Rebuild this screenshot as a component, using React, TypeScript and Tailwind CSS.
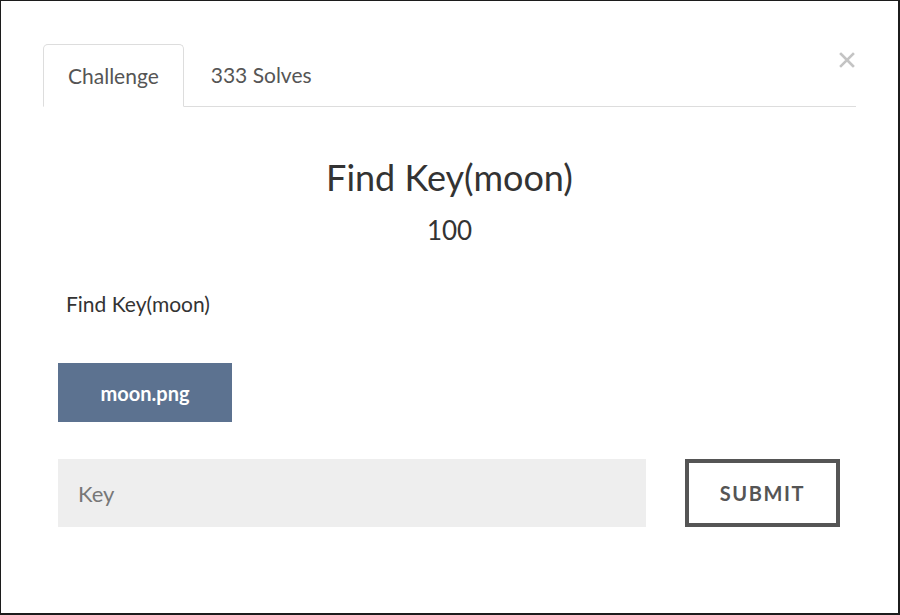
import React from "react";

export default function App() {
  return (
    <div className="w-[900px] h-[615px] bg-[#1c1c1c] pl-px pt-px pr-[2px] pb-[2px]" style={{ fontFamily: "Lato, 'Open Sans', sans-serif" }}>
      <div className="relative w-full h-full bg-white px-[42px] pt-[43px]">
        <button className="absolute left-[837px] top-[50px] w-[18px] h-[18px] flex items-center justify-center">
          <svg width="16" height="16" viewBox="0 0 16 16">
            <path d="M2 2 L14 14 M14 2 L2 14" stroke="#c4c4c4" strokeWidth="2.6" strokeLinecap="square" />
          </svg>
        </button>
        <div className="flex border-b border-[#dddddd] h-[63px]">
          <div className="h-[63px] -mb-px px-[24px] flex items-center border border-[#dddddd] border-b-white rounded-t-[5px] bg-white text-[21px] text-[#555555]">
            Challenge
          </div>
          <div className="h-[62px] ml-[2px] px-[25px] flex items-center text-[21px] text-[#555555]">
            333 Solves
          </div>
        </div>
        <div className="px-[15px]">
          <h1 className="mt-[48px] text-center text-[36px] leading-[44px] text-[#333333]">Find Key(moon)</h1>
          <div className="mt-[15px] text-center text-[26px] leading-[32px] text-[#333333]">100</div>
          <p className="mt-[43px] ml-[8px] text-[21px] leading-[30px] text-[#333333]">Find Key(moon)</p>
          <div className="mt-[44px] w-[174px] h-[59px] bg-[#5c7290] flex items-center justify-center text-white font-bold text-[20px]">
            moon.png
          </div>
          <div className="mt-[37px] flex items-stretch h-[68px]">
            <div className="w-[588px] bg-[#eeeeee] flex items-center pl-[20px] text-[22px] text-[#777777]">
              Key
            </div>
            <div className="ml-[39px] w-[155px] border-[4px] border-[#555555] flex items-center justify-center text-[20px] font-bold tracking-[1.6px] text-[#555555]">
              SUBMIT
            </div>
          </div>
        </div>
      </div>
    </div>
  );
}
